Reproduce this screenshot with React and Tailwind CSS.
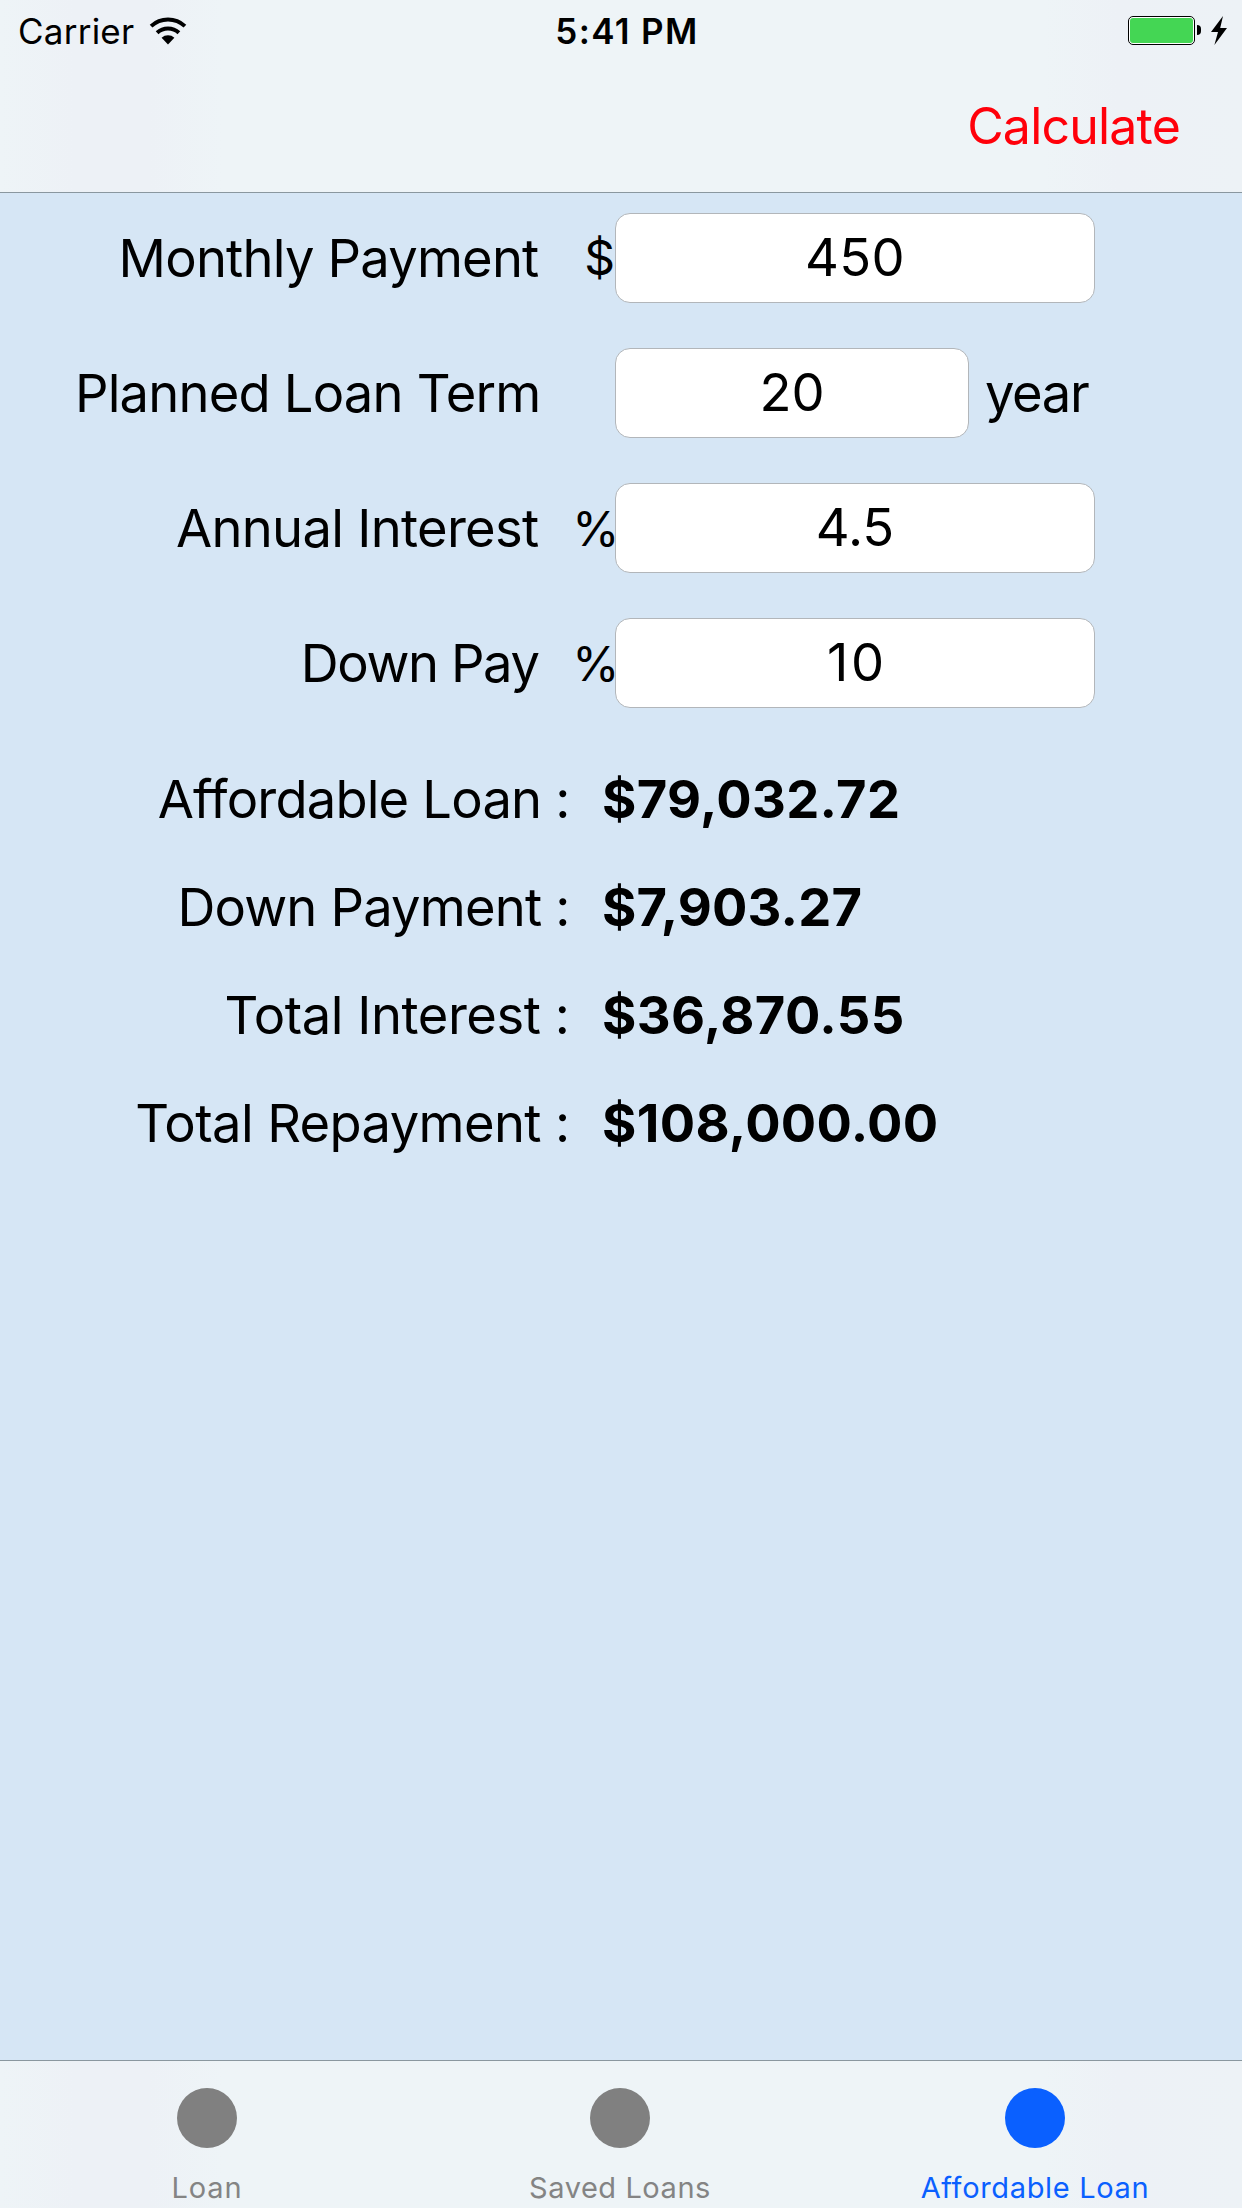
const fields = [
  { label: "Monthly Payment", labelClass: "w-[538.5px] tracking-[-0.8px]", unit: "$", unitClass: "w-[76.5px]", value: "450", inputClass: "w-[480px] tracking-[0.4px]" },
  { label: "Planned Loan Term", labelClass: "w-[540.5px] tracking-[-0.8px]", unit: "", unitClass: "w-[74.5px]", value: "20", inputClass: "w-[354px]", suffix: "year" },
  { label: "Annual Interest", labelClass: "w-[538.5px] tracking-[-0.7px]", unit: "%", unitClass: "w-[81px] -mr-[4.5px] pt-[2px]", value: "4.5", inputClass: "w-[480px]" },
  { label: "Down Pay", labelClass: "w-[538.5px] tracking-[-1.4px]", unit: "%", unitClass: "w-[81px] -mr-[4.5px] pt-[2px]", value: "10", inputClass: "w-[480px] tracking-[2.8px] pl-[4px]" },
];

const results = [
  { label: "Affordable Loan :", labelClass: "tracking-[-0.82px]", value: "$79,032.72", valueClass: "tracking-[0.32px]" },
  { label: "Down Payment :", labelClass: "tracking-[-0.82px]", value: "$7,903.27", valueClass: "tracking-[0.17px]" },
  { label: "Total Interest :", labelClass: "tracking-[-0.45px]", value: "$36,870.55", valueClass: "tracking-[0.37px]" },
  { label: "Total Repayment :", labelClass: "tracking-[-0.62px]", value: "$108,000.00", valueClass: "tracking-[0.33px]" },
];

const tabs = [
  { label: "Loan", className: "text-[#848484] w-[414px] tracking-[0.82px]", dot: "bg-[#808080]" },
  { label: "Saved Loans", className: "text-[#848484] w-[412px] tracking-[0.55px]", dot: "bg-[#808080]" },
  { label: "Affordable Loan", className: "text-[#0a60ff] w-[418px] tracking-[0.67px]", dot: "bg-[#0a60ff]" },
];

function WifiIcon() {
  return (
    <svg className="ml-[15px] h-[28px] w-[38px]" viewBox="-19 -27.5 38 28" fill="none" stroke="#000" strokeWidth="4">
      <path d="M-16.9-18.4A25 25 0 0 1 16.9-18.4" />
      <path d="M-10.9-11.7A16 16 0 0 1 10.9-11.7" />
      <path d="M0 0L-6.4-6.8A9.5 9.5 0 0 1 6.4-6.8Z" fill="#000" stroke="none" />
    </svg>
  );
}

function Battery() {
  return (
    <div className="flex items-center">
      <div className="h-[29px] w-[67px] rounded-[5px] border border-black bg-white p-px">
        <div className="h-full w-full rounded-[3px] bg-[#44d654]" />
      </div>
      <div className="ml-[2px] h-[10px] w-[4px] rounded-r-full bg-black" />
      <svg className="ml-[10px] h-[29px] w-[16px]" viewBox="0 0 16 29" fill="#000">
        <path d="M12 0L0 16h7L3.4 29L16 12H9.2Z" />
      </svg>
    </div>
  );
}

function Field({ label, labelClass, unit, unitClass, value, inputClass, suffix }) {
  return (
    <div className="flex h-[90px] items-center">
      <label className={`shrink-0 flex justify-end whitespace-nowrap ${labelClass}`}>{label}</label>
      <span className={`shrink-0 text-right text-[48px] ${unitClass}`}>{unit}</span>
      <input
        readOnly
        value={value}
        aria-label={label}
        className={`h-[90px] shrink-0 rounded-[15px] border border-[#b2b6ba] bg-white pb-[3px] text-center outline-none ${inputClass}`}
      />
      {suffix && <span className="ml-[16px] tracking-[-1.4px]">{suffix}</span>}
    </div>
  );
}

export default function App() {
  return (
    <div className="flex h-[2208px] w-[1242px] flex-col overflow-hidden bg-[#d6e6f5] font-['Inter',sans-serif] text-black">
      <header className="h-[193px] border-b border-[#8a979f] bg-[linear-gradient(to_right,#eef4f7_0%,#edf1f6_6%,#edf1f6_12%,#eef4f7_18%,#eef4f7_84%,#edf1f6_90%,#edf2f6_100%)]">
        <div className="grid h-[60px] grid-cols-[1fr_auto_1fr] items-center pt-[2px] text-[35px] leading-none">
          <div className="flex items-center pl-[18px]">
            <span className="tracking-[0.24px]">Carrier</span>
            <WifiIcon />
          </div>
          <span className="translate-x-[6px] font-semibold tracking-[1.36px]">5:41 PM</span>
          <div className="flex justify-end pr-[15px] pb-[2px]">
            <Battery />
          </div>
        </div>
        <nav className="flex h-[132px] items-center justify-end pr-[62px]">
          <button className="text-[50px] leading-none tracking-[-0.8px] text-[#ff000a]">Calculate</button>
        </nav>
      </header>

      <main className="flex-1 pt-[20px] text-[52.5px] leading-none">
        <section className="flex flex-col gap-[45px]">
          {fields.map((f) => (
            <Field key={f.label} {...f} />
          ))}
        </section>
        <section className="mt-[37px]">
          {results.map((r) => (
            <div key={r.label} className="flex h-[108px] items-center whitespace-nowrap">
              <span className={`w-[569.5px] text-right ${r.labelClass}`}>{r.label}</span>
              <span className={`ml-[32.5px] font-bold ${r.valueClass}`}>{r.value}</span>
            </div>
          ))}
        </section>
      </main>

      <footer className="flex h-[148px] border-t border-[#8a979f] bg-[linear-gradient(to_right,#eef4f7_0%,#edf1f6_6%,#edf1f6_12%,#eef4f7_18%,#eef4f7_84%,#edf1f6_90%,#edf2f6_100%)]">
        {tabs.map((t) => (
          <div key={t.label} className={`flex shrink-0 flex-col items-center pt-[27px] text-[29px] leading-none ${t.className}`}>
            <span className={`size-[60px] rounded-full ${t.dot}`} />
            <span className="mt-[25px]">{t.label}</span>
          </div>
        ))}
      </footer>
    </div>
  );
}
